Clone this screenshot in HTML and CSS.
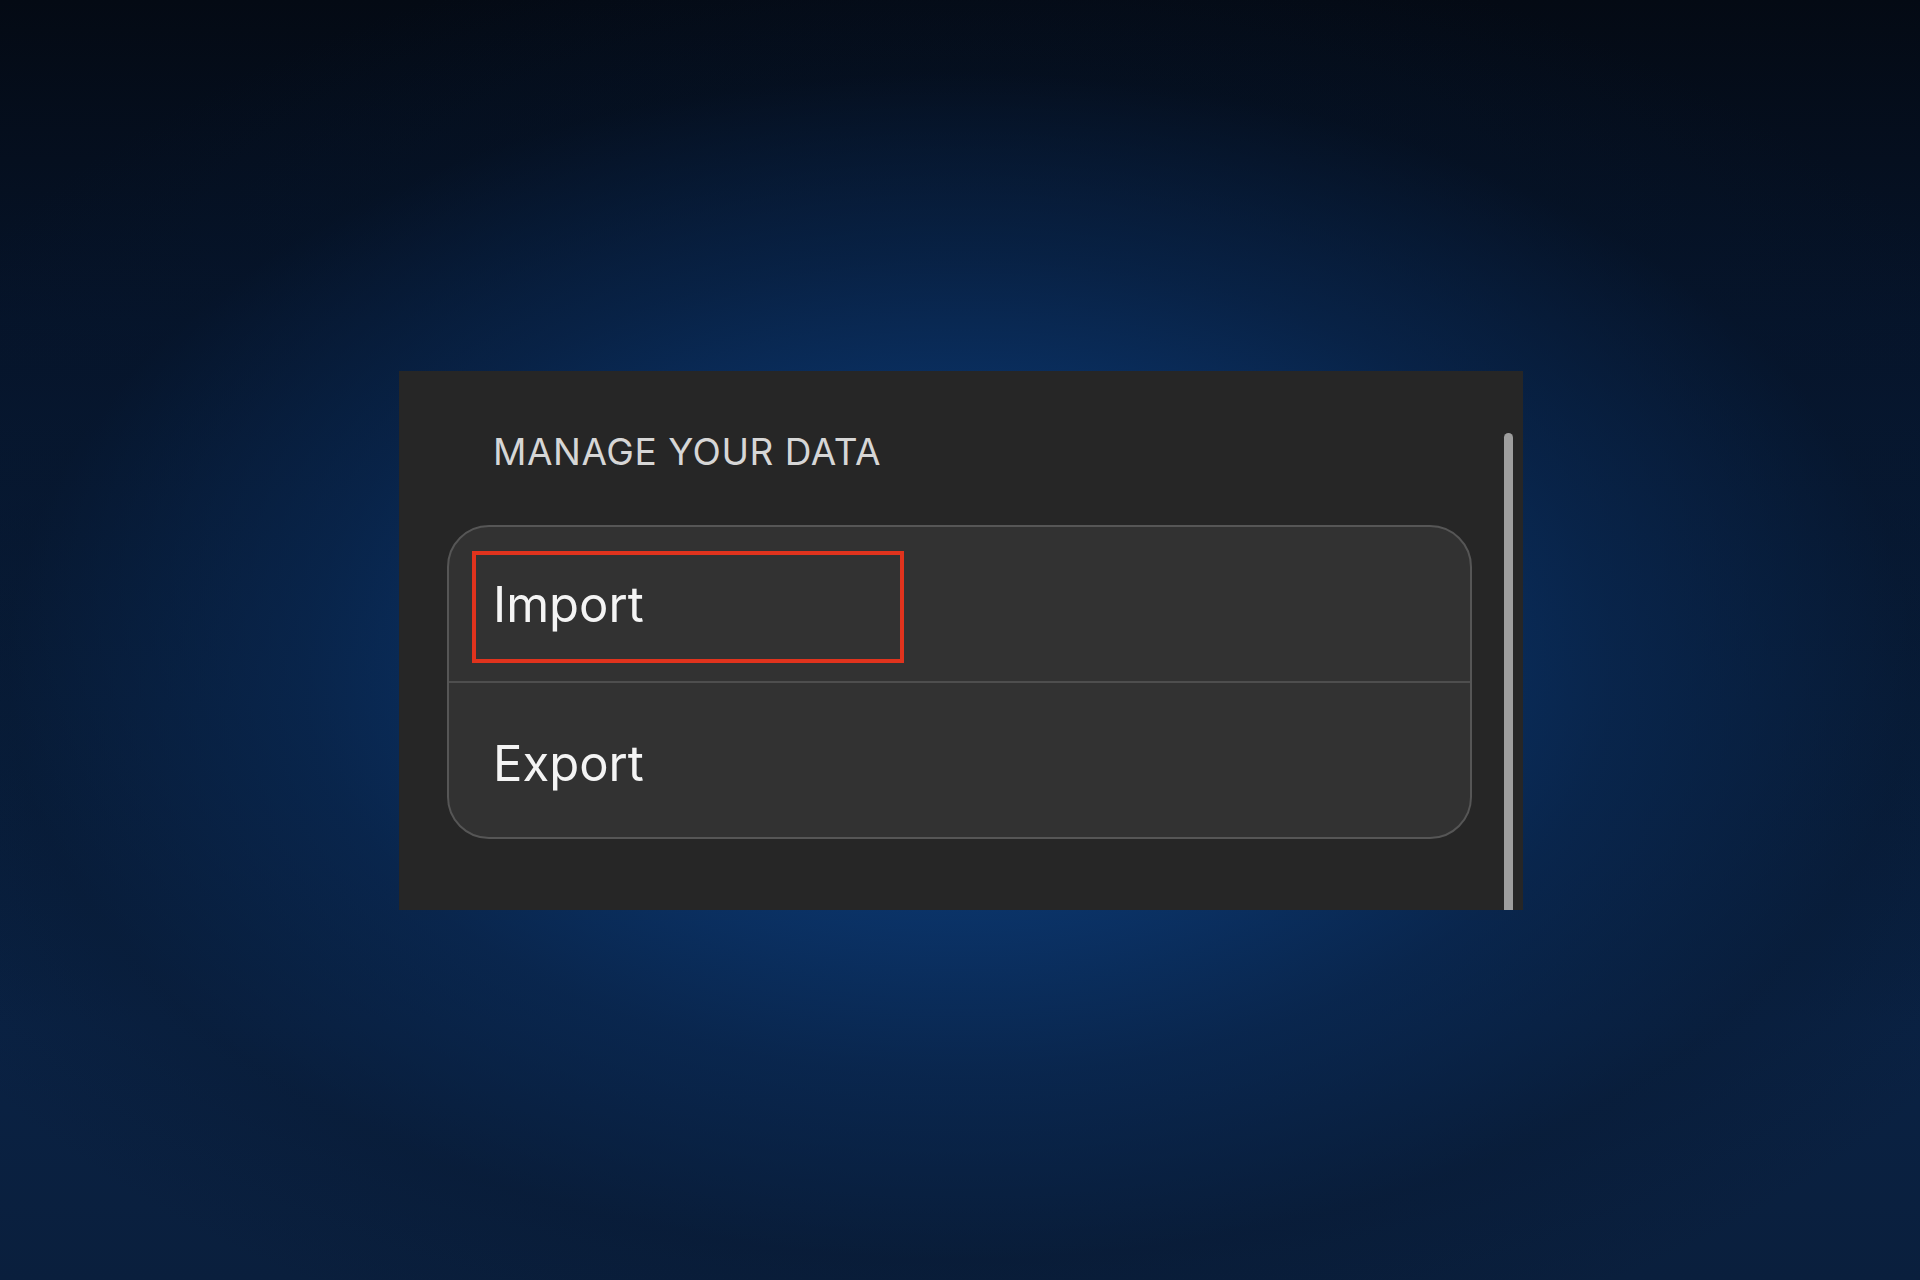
FILE: index.html
```html
<!DOCTYPE html>
<html lang="en">
<head>
<meta charset="utf-8">
<title>Manage your data</title>
<link rel="stylesheet" href="styles.css">
</head>
<body>
<div class="stage">
  <section class="panel">
    <div class="content">
      <h2 class="section-title">MANAGE YOUR DATA</h2>
      <div class="group">
        <div class="row row-first">
          <span class="label">Import</span>
          <span class="highlight"></span>
        </div>
        <div class="row row-last">
          <span class="label">Export</span>
        </div>
      </div>
    </div>
    <div class="scroll-track"><div class="scroll-thumb"></div></div>
  </section>
</div>
</body>
</html>
```

FILE: styles.css
```css
html, body {
  margin: 0;
  padding: 0;
}
body {
  width: 1920px;
  height: 1280px;
  overflow: hidden;
  font-family: "Inter", "Roboto", "Liberation Sans", sans-serif;
  background:
    radial-gradient(ellipse 62% 58% at 50% 52%, rgba(12,64,130,0.95) 0%, rgba(11,55,112,0.9) 30%, rgba(9,40,82,0.7) 55%, rgba(6,22,45,0.3) 80%, rgba(4,10,20,0) 100%),
    linear-gradient(180deg, #040a14 0%, #06142a 25%, #081d3a 55%, #0a2244 80%, #0a1f3d 100%);
}
.stage {
  box-sizing: border-box;
  height: 1280px;
  padding: 371px 0 0 399px;
}
.panel {
  width: 1124px;
  height: 539px;
  background: #262626;
  display: flex;
}
.content {
  width: 1105px;
  padding-left: 48px;
  box-sizing: border-box;
}
.section-title {
  margin: 62px 0 0 46px;
  font-size: 37px;
  line-height: 37px;
  font-weight: 400;
  color: #d6d6d6;
  letter-spacing: 0.55px;
}
.group {
  margin-top: 55px;
  width: 1025px;
  height: 314px;
  box-sizing: border-box;
  border: 2px solid #565656;
  border-radius: 42px;
  background: #323232;
  overflow: hidden;
}
.row {
  position: relative;
  height: 156px;
  box-sizing: border-box;
  padding-left: 44px;
  display: flex;
  align-items: center;
}
.row-first {
  border-bottom: 2px solid #4e4e4e;
}
.label {
  font-size: 49px;
  line-height: 49px;
  color: #f4f4f4;
  font-weight: 400;
}
.row-last .label {
  margin-top: 4px;
}
.highlight {
  position: absolute;
  left: 23px;
  top: 24px;
  width: 432px;
  height: 112px;
  box-sizing: border-box;
  border: 4px solid #e0331d;
}
.scroll-track {
  width: 19px;
  padding-top: 62px;
  display: flex;
}
.scroll-thumb {
  width: 9px;
  height: 100%;
  background: #9e9e9e;
  border-radius: 5px 5px 0 0;
}
```
